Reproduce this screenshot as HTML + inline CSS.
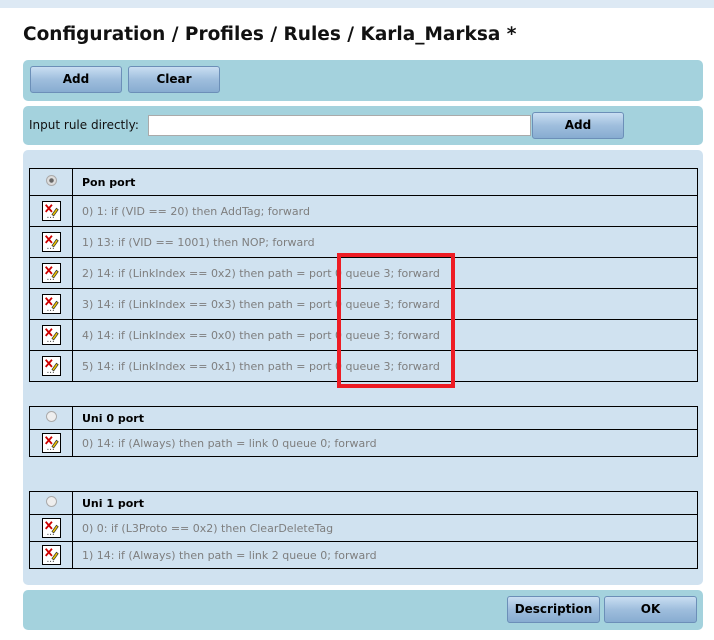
<!DOCTYPE html>
<html><head><meta charset="utf-8"><style>
*{margin:0;padding:0;box-sizing:border-box}
body{width:714px;height:640px;background:#fff;font-family:"DejaVu Sans","Liberation Sans",sans-serif;position:relative;overflow:hidden}
.a{position:absolute}
.top{left:0;top:0;width:714px;height:8px;background:#dde9f4}
h1{position:absolute;left:23px;top:24px;font-size:18.5px;font-weight:bold;color:#111;white-space:nowrap}
.p{position:absolute;left:23px;width:680px;border-radius:5px;background:#a4d2dd}
.btn{position:absolute;height:27px;border:1px solid #6c8fb8;border-radius:3px;background:linear-gradient(#c9def2,#9fbedd 50%,#87acd1);font-size:12px;font-weight:bold;text-align:center;line-height:25px;color:#000}
table{position:absolute;left:29px;width:669px;border-collapse:collapse;font-size:11px}
td{border:1px solid #000;height:31px;color:#7e7e7e;padding-left:9px}
td.i{width:43px;padding:0;text-align:center}
tr.h td{color:#000;font-weight:bold;height:27px}
.rad{display:inline-block;width:11px;height:11px;border-radius:50%;border:1px solid #aaa;background:radial-gradient(#666 30%,#ddd 40%)}
.rad.e{background:#eee}
.ic{display:inline-block;width:19px;height:20px;border:1px solid #000;background:#fff;vertical-align:middle}
</style></head><body>
<div class="a top"></div>
<h1>Configuration / Profiles / Rules / Karla_Marksa *</h1>
<div class="p" style="top:60px;height:41px"></div>
<div class="btn" style="left:30px;top:66px;width:92px">Add</div>
<div class="btn" style="left:128px;top:66px;width:92px">Clear</div>
<div class="p" style="top:106px;height:39px"></div>
<div class="a" style="left:29px;top:118px;font-size:12px;color:#111">Input rule directly:</div>
<div class="a" style="left:148px;top:115px;width:383px;height:21px;background:#fff;border:1px solid #aaa"></div>
<div class="btn" style="left:532px;top:112px;width:92px">Add</div>
<div class="p" style="top:150px;height:435px;background:#d0e2f0"></div>
<svg width="0" height="0" style="position:absolute"><defs><symbol id="ic" viewBox="0 0 19 20"><path d="M3 3l7 8M10 3l-7 8" stroke="#c00" stroke-width="2"/><path d="M10 14l5-7 2 1.5-5 7z" fill="#e8c000" stroke="#333" stroke-width=".8"/><path d="M5 17h1M8 17h1M11 17h1" stroke="#000"/></symbol></defs></svg>
<table style="top:168px">
<tr class="h"><td class="i"><span class="rad"></span></td><td>Pon port</td></tr>
<tr><td class="i"><svg class="ic" viewBox="0 0 19 20"><use href="#ic"/></svg></td><td>0) 1: if (VID == 20) then AddTag; forward</td></tr>
<tr><td class="i"><svg class="ic" viewBox="0 0 19 20"><use href="#ic"/></svg></td><td>1) 13: if (VID == 1001) then NOP; forward</td></tr>
<tr><td class="i"><svg class="ic" viewBox="0 0 19 20"><use href="#ic"/></svg></td><td>2) 14: if (LinkIndex == 0x2) then path = port 0 queue 3; forward</td></tr>
<tr><td class="i"><svg class="ic" viewBox="0 0 19 20"><use href="#ic"/></svg></td><td>3) 14: if (LinkIndex == 0x3) then path = port 0 queue 3; forward</td></tr>
<tr><td class="i"><svg class="ic" viewBox="0 0 19 20"><use href="#ic"/></svg></td><td>4) 14: if (LinkIndex == 0x0) then path = port 0 queue 3; forward</td></tr>
<tr><td class="i"><svg class="ic" viewBox="0 0 19 20"><use href="#ic"/></svg></td><td>5) 14: if (LinkIndex == 0x1) then path = port 0 queue 3; forward</td></tr>
</table>
<table style="top:406px">
<tr class="h"><td class="i" style="height:23px"><span class="rad e"></span></td><td style="height:23px">Uni 0 port</td></tr>
<tr><td class="i" style="height:27px"><svg class="ic" viewBox="0 0 19 20"><use href="#ic"/></svg></td><td style="height:27px">0) 14: if (Always) then path = link 0 queue 0; forward</td></tr>
</table>
<table style="top:491px">
<tr class="h"><td class="i" style="height:23px"><span class="rad e"></span></td><td style="height:23px">Uni 1 port</td></tr>
<tr><td class="i" style="height:27px"><svg class="ic" viewBox="0 0 19 20"><use href="#ic"/></svg></td><td style="height:27px">0) 0: if (L3Proto == 0x2) then ClearDeleteTag</td></tr>
<tr><td class="i" style="height:27px"><svg class="ic" viewBox="0 0 19 20"><use href="#ic"/></svg></td><td style="height:27px">1) 14: if (Always) then path = link 2 queue 0; forward</td></tr>
</table>
<div class="a" style="left:337px;top:253px;width:118px;height:135px;border:4px solid #ee1c24"></div>
<div class="p" style="top:590px;height:40px"></div>
<div class="btn" style="left:507px;top:596px;width:93px">Description</div>
<div class="btn" style="left:604px;top:596px;width:93px">OK</div>
</body></html>
